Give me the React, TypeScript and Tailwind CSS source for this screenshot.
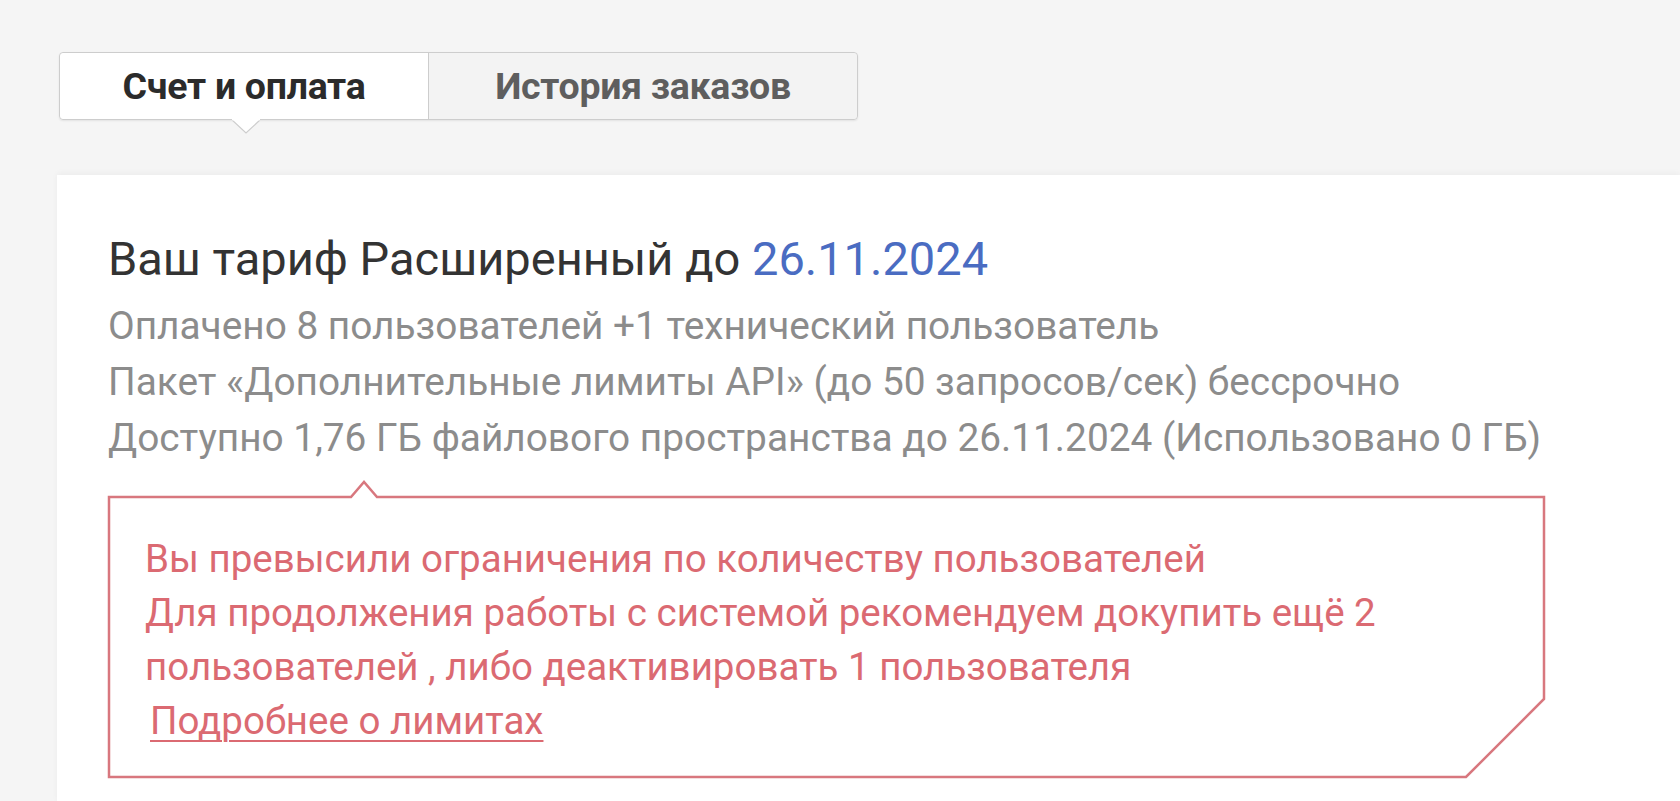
import React from "react";

const font = { fontFamily: "Roboto, 'Noto Sans', sans-serif" };

function Tabs() {
  return (
    <div className="inline-flex h-[68px] rounded-[4px] border border-[#cdcdcd] shadow-[0_1px_2px_rgba(0,0,0,0.08)]">
      <div className="relative flex w-[368px] items-center justify-center rounded-l-[4px] bg-white text-[37.5px] font-bold tracking-[-0.3px] text-[#2b2b2b]">
        Счет и оплата
        <svg
          className="absolute left-[172px] top-[66px]"
          width="28"
          height="16"
          viewBox="0 0 28 16"
        >
          <path d="M0 1 L14 14 L28 1" fill="#ffffff" stroke="#cdcdcd" strokeWidth="1.2" />
          <rect x="0" y="0" width="28" height="1.4" fill="#ffffff" />
        </svg>
      </div>
      <div className="flex w-[429px] items-center justify-center rounded-r-[4px] border-l border-[#cdcdcd] bg-[#f3f3f3] text-[37.5px] font-bold tracking-[-0.3px] text-[#5e5e5e]">
        История заказов
      </div>
    </div>
  );
}

function Alert() {
  return (
    <div className="relative mt-[30px] h-[282px] w-[1437px]">
      <svg
        className="absolute left-0 top-0 overflow-visible"
        width="1437"
        height="282"
        viewBox="0 0 1437 282"
      >
        <path
          d="M1 1 L243 1 L256 -14 L269 1 L1436 1 L1436 203 L1358 281 L1 281 Z"
          fill="#ffffff"
          stroke="#d8777e"
          strokeWidth="2.5"
          strokeLinejoin="miter"
        />
      </svg>
      <div className="relative pl-[37px] pt-[36px] text-[38.5px] leading-[54px] text-[#db6a72]">
        <div>Вы превысили ограничения по количеству пользователей</div>
        <div>Для продолжения работы с системой рекомендуем докупить ещё 2</div>
        <div>пользователей , либо деактивировать 1 пользователя</div>
        <div className="pl-[5px]">
          <a href="#" className="underline underline-offset-[6px] decoration-[1.5px]">
            Подробнее о лимитах
          </a>
        </div>
      </div>
    </div>
  );
}

export default function App() {
  return (
    <div className="min-h-screen overflow-hidden bg-[#f5f5f5]" style={font}>
      <div className="pl-[59px] pt-[52px]">
        <Tabs />
      </div>
      <div className="ml-[57px] mt-[55px] min-h-[628px] bg-white pl-[51px] pt-[54px] shadow-[0_-2px_6px_rgba(0,0,0,0.04)]">
        <h1 className="text-[47px] leading-[60px] text-[#333333]">
          Ваш тариф Расширенный до <span className="text-[#4a6cc2]">26.11.2024</span>
        </h1>
        <div className="mt-[9px] text-[38.8px] leading-[56px] text-[#8c8c8c]">
          <div>Оплачено 8 пользователей +1 технический пользователь</div>
          <div>Пакет «Дополнительные лимиты API» (до 50 запросов/сек) бессрочно</div>
          <div>Доступно 1,76 ГБ файлового пространства до 26.11.2024 (Использовано 0 ГБ)</div>
        </div>
        <Alert />
      </div>
    </div>
  );
}
